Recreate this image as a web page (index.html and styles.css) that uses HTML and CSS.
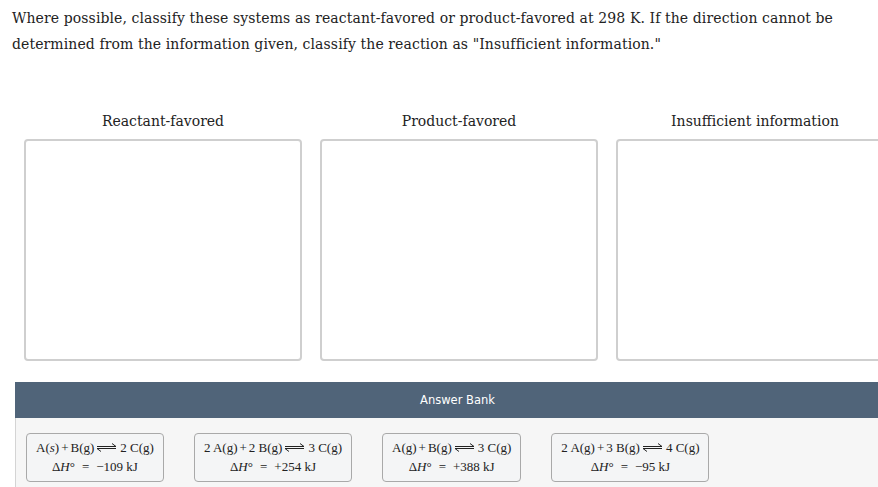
FILE: index.html
```html
<!DOCTYPE html>
<html>
<head>
<meta charset="utf-8">
<link rel="stylesheet" href="styles.css">
</head>
<body>
<div class="page">
  <p class="prompt">Where possible, classify these systems as reactant-favored or product-favored at 298 K. If the direction cannot be<br>determined from the information given, classify the reaction as "Insufficient information."</p>

  <div class="columns">
    <div class="column">
      <div class="col-title">Reactant-favored</div>
      <div class="dropzone"></div>
    </div>
    <div class="column">
      <div class="col-title">Product-favored</div>
      <div class="dropzone"></div>
    </div>
    <div class="column">
      <div class="col-title">Insufficient information</div>
      <div class="dropzone"></div>
    </div>
  </div>

  <div class="bank">
    <div class="bank-header">Answer Bank</div>
    <div class="bank-body">
      <div class="card">
        <div class="eq">A(<i>s</i>)<span class="op">+</span>B(g)<svg class="arrow" width="22" height="9" viewBox="0 0 22 9"><path d="M1 3.5H20L16 0.5M20 5.5H1L5 8.5" fill="none" stroke="#222" stroke-width="1"/></svg>2 C(g)</div>
        <div class="dh">&Delta;<i>H</i>&deg;<span class="eqs">=</span>&minus;109 kJ</div>
      </div>
      <div class="card">
        <div class="eq">2 A(g)<span class="op">+</span>2 B(g)<svg class="arrow" width="22" height="9" viewBox="0 0 22 9"><path d="M1 3.5H20L16 0.5M20 5.5H1L5 8.5" fill="none" stroke="#222" stroke-width="1"/></svg>3 C(g)</div>
        <div class="dh">&Delta;<i>H</i>&deg;<span class="eqs">=</span>+254 kJ</div>
      </div>
      <div class="card">
        <div class="eq">A(g)<span class="op">+</span>B(g)<svg class="arrow" width="22" height="9" viewBox="0 0 22 9"><path d="M1 3.5H20L16 0.5M20 5.5H1L5 8.5" fill="none" stroke="#222" stroke-width="1"/></svg>3 C(g)</div>
        <div class="dh">&Delta;<i>H</i>&deg;<span class="eqs">=</span>+388 kJ</div>
      </div>
      <div class="card">
        <div class="eq">2 A(g)<span class="op">+</span>3 B(g)<svg class="arrow" width="22" height="9" viewBox="0 0 22 9"><path d="M1 3.5H20L16 0.5M20 5.5H1L5 8.5" fill="none" stroke="#222" stroke-width="1"/></svg>4 C(g)</div>
        <div class="dh">&Delta;<i>H</i>&deg;<span class="eqs">=</span>&minus;95 kJ</div>
      </div>
    </div>
  </div>
</div>
</body>
</html>
```

FILE: styles.css
```css
html, body {
  margin: 0;
  padding: 0;
  background: #ffffff;
  overflow: hidden;
}

.page {
  width: 920px;
  font-family: "DejaVu Serif", "Liberation Serif", serif;
  color: #222;
}

.prompt {
  margin: 0;
  padding: 5px 0 0 12px;
  font-size: 14px;
  line-height: 26px;
  white-space: nowrap;
  letter-spacing: 0.1px;
}

.columns {
  display: flex;
  gap: 18px;
  margin: 55px 0 0 24px;
}

.column {
  width: 278px;
}

.col-title {
  text-align: center;
  font-size: 14px;
  line-height: 18px;
  height: 18px;
  margin-bottom: 9px;
}

.dropzone {
  height: 218px;
  border: 2px solid #cfcfcf;
  border-radius: 4px;
}

.bank {
  margin: 21px 0 0 15px;
  width: 905px;
}

.bank-header {
  height: 36px;
  background: #506479;
  color: #ffffff;
  font-family: "DejaVu Sans", Verdana, sans-serif;
  font-size: 11.5px;
  line-height: 36px;
  text-align: center;
  padding-right: 20px;
}

.bank-body {
  display: flex;
  gap: 30px;
  background: #f6f6f6;
  border-left: 1px solid #d4d4d4;
  padding: 15px 0 20px 10px;
}

.card {
  border: 1px solid #a9a9a9;
  border-radius: 4px;
  background: #f4f5f6;
  padding: 4px 9px 5px;
  text-align: center;
  font-family: "Liberation Serif", serif;
  font-size: 13px;
  line-height: 19px;
  white-space: nowrap;
}

.op {
  margin: 0 2px;
}

.eqs {
  margin: 0 7px;
}

.arrow {
  vertical-align: 0px;
  margin: 0 2px;
}
```
